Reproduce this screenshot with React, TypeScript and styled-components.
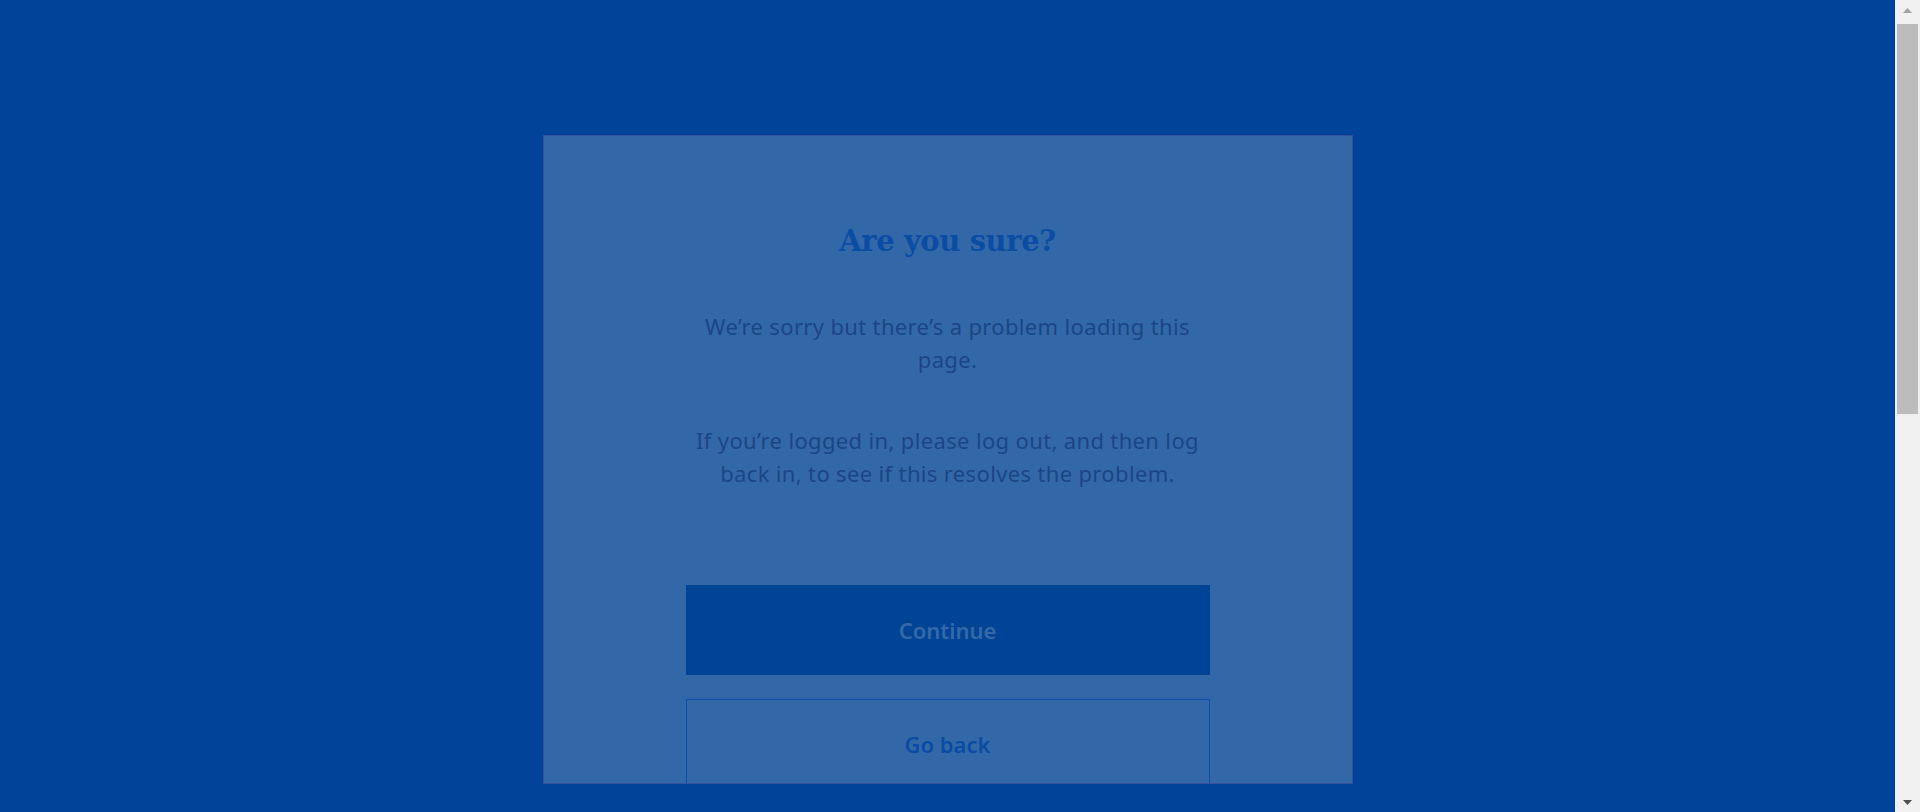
import React from "react";
import styled, { createGlobalStyle } from "styled-components";

const GlobalStyle = createGlobalStyle`
  html, body {
    margin: 0;
    padding: 0;
    background: #00449a;
    overflow: hidden;
  }
  body {
    font-family: "Noto Sans", "Liberation Sans", sans-serif;
  }
`;

const Screen = styled.div`
  display: flex;
  height: 100vh;
  overflow: hidden;
`;

const Main = styled.main`
  flex: 1;
  min-width: 0;
  padding-top: 135px;
  overflow: hidden;
`;

const ScrollBar = styled.div`
  width: 25px;
  flex-shrink: 0;
  background: #f0f0f0;
  display: flex;
  flex-direction: column;
`;

const ArrowButton = styled.div`
  height: 20px;
  flex-shrink: 0;
  display: flex;
  align-items: center;
  justify-content: center;
`;

const Track = styled.div`
  flex: 1;
  padding: 4px 2px 0;
`;

const Thumb = styled.div`
  height: 390px;
  background: #bcbcbc;
`;

const Modal = styled.section`
  box-sizing: border-box;
  width: 810px;
  height: 649px;
  margin: 0 auto;
  background: #3368a8;
  border: 1px solid #34509a;
  overflow: hidden;
  padding: 86px 142px 0;
  display: flex;
  flex-direction: column;
  align-items: stretch;
`;

const Title = styled.h2`
  margin: 0;
  font-family: "DejaVu Serif", "Liberation Serif", serif;
  font-weight: 700;
  font-size: 29px;
  line-height: 38px;
  letter-spacing: -0.4px;
  color: #0b4ca4;
  text-align: center;
`;

const Text = styled.p<{ $top: number }>`
  margin: ${(p) => p.$top}px 0 0;
  font-family: "Noto Sans", "Liberation Sans", sans-serif;
  font-size: 22px;
  line-height: 33px;
  letter-spacing: 0.35px;
  color: #1c4585;
  text-align: center;
`;

const Actions = styled.div`
  margin-top: 95px;
  display: flex;
  flex-direction: column;
  gap: 24px;
`;

const Button = styled.button<{ $variant: "primary" | "secondary" }>`
  box-sizing: border-box;
  height: 90px;
  width: 100%;
  flex-shrink: 0;
  font-family: "Noto Sans", "Liberation Sans", sans-serif;
  font-weight: 600;
  font-size: 22px;
  cursor: pointer;
  border: 1px solid ${(p) => (p.$variant === "primary" ? "#004496" : "#0b4ea8")};
  background: ${(p) => (p.$variant === "primary" ? "#004496" : "transparent")};
  color: ${(p) => (p.$variant === "primary" ? "#3468a8" : "#0a4ba3")};
`;

function Triangle({ up }: { up: boolean }) {
  return (
    <svg width="9" height="5" viewBox="0 0 9 5">
      <path d={up ? "M0 5 L4.5 0 L9 5 Z" : "M0 0 L4.5 5 L9 0 Z"} fill={up ? "#a3a3a3" : "#505050"} />
    </svg>
  );
}

export default function App() {
  return (
    <>
      <GlobalStyle />
      <Screen>
        <Main>
          <Modal>
            <Title>Are you sure?</Title>
            <Text $top={50}>We’re sorry but there’s a problem loading this page.</Text>
            <Text $top={48}>
              If you’re logged in, please log out, and then log back in, to see if this resolves the problem.
            </Text>
            <Actions>
              <Button $variant="primary">Continue</Button>
              <Button $variant="secondary">Go back</Button>
            </Actions>
          </Modal>
        </Main>
        <ScrollBar>
          <ArrowButton>
            <Triangle up />
          </ArrowButton>
          <Track>
            <Thumb />
          </Track>
          <ArrowButton>
            <Triangle up={false} />
          </ArrowButton>
        </ScrollBar>
      </Screen>
    </>
  );
}
